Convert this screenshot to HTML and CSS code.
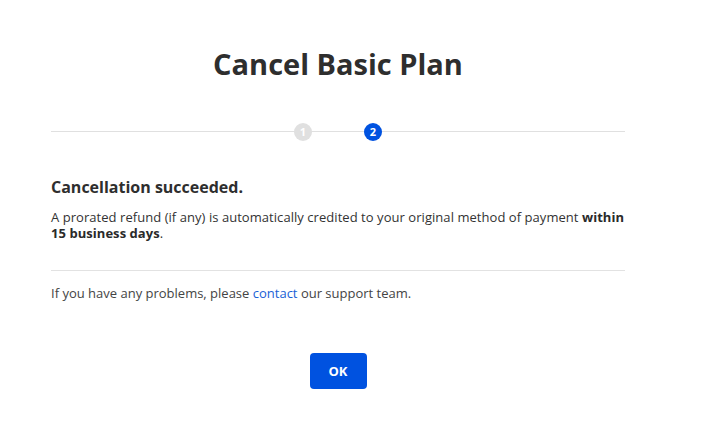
FILE: index.html
```html
<!DOCTYPE html>
<html lang="en">
<head>
<meta charset="utf-8">
<title>Cancel Basic Plan</title>
<link rel="stylesheet" href="styles.css">
</head>
<body>
<div class="modal">
  <h1 class="title">Cancel Basic Plan</h1>
  <div class="stepper">
    <span class="step done">1</span>
    <span class="step active">2</span>
  </div>
  <h2 class="heading">Cancellation succeeded.</h2>
  <p class="text">A prorated refund (if any) is automatically credited to your original method of payment <strong>within 15 business days</strong>.</p>
  <hr class="divider">
  <p class="note">If you have any problems, please <a class="link" href="#">contact</a> our support team.</p>
  <div class="actions">
    <button class="btn">OK</button>
  </div>
</div>
</body>
</html>
```
FILE: styles.css
```css
html, body {
  margin: 0;
  padding: 0;
  background: #ffffff;
}
body {
  font-family: "Open Sans", "Noto Sans", sans-serif;
  color: #333333;
}
.modal {
  width: 574px;
  margin-left: 51px;
  padding-top: 45px;
}
.title {
  margin: 0;
  text-align: center;
  font-size: 29px;
  line-height: 38px;
  font-weight: 700;
  color: #2e2e2e;
}
.stepper {
  margin-top: 40px;
  height: 18px;
  position: relative;
  display: flex;
  justify-content: center;
  gap: 52px;
}
.stepper::before {
  content: "";
  position: absolute;
  left: 0;
  right: 0;
  top: 8px;
  height: 1px;
  background: #e0e0e0;
}
.step {
  position: relative;
  width: 18px;
  height: 18px;
  border-radius: 50%;
  color: #fff;
  font-size: 11px;
  font-weight: 700;
  line-height: 18px;
  text-align: center;
}
.step.done { background: #e0e0e0; }
.step.active { background: #0052e0; }
.heading {
  margin: 36px 0 0;
  font-size: 16px;
  line-height: 20px;
  font-weight: 700;
  color: #2e2e2e;
}
.text {
  margin: 12px 0 0;
  font-size: 13px;
  line-height: 16px;
  letter-spacing: 0.05px;
  color: #333;
}
.text strong { font-weight: 700; color: #2a2a2a; }
.divider {
  margin: 29px 0 0;
  border: 0;
  height: 1px;
  background: #e2e2e2;
}
.note {
  margin: 14px 0 0;
  font-size: 13px;
  line-height: 16px;
  color: #444;
}
.link { color: #1a5fd6; text-decoration: none; }
.actions {
  margin-top: 52px;
  display: flex;
  justify-content: center;
}
.btn {
  width: 57px;
  height: 36px;
  border: 0;
  border-radius: 4px;
  background: #0052e0;
  color: #fff;
  font-family: inherit;
  font-size: 13px;
  font-weight: 700;
  cursor: pointer;
}
```
